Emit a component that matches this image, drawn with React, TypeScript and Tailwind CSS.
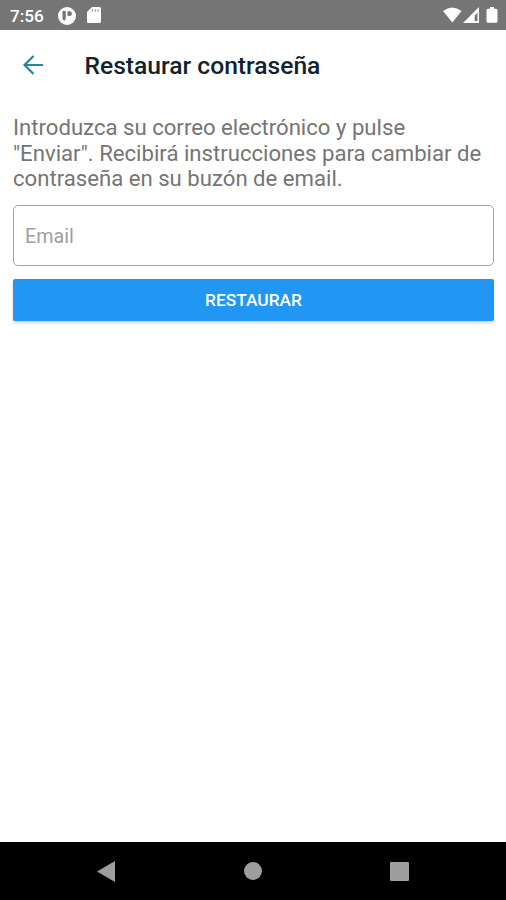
import React, { useState } from 'react';

const StatusBar: React.FC = () => (
  <div className="h-[30px] shrink-0 bg-[#757575] flex items-center text-white pl-[10px] pr-2">
    <span className="w-[48px] text-[17.200px] leading-5 font-medium pt-0.5">7:56</span>
    <svg width="18" height="18" viewBox="0 0 18 18" className="mt-px">
      <circle cx="9" cy="9" r="9" fill="#fff" />
      <path d="M4.500 4h3.300v7q0 2-1.700 2.700L4.500 12z" fill="#757575" />
      <path d="M9.500 4.300h2a2.300 2.300 0 0 1 0 4.800h-2z" fill="#757575" />
    </svg>
    <svg width="14" height="16" viewBox="0 0 14 16" className="ml-[11px]">
      <path d="M5 0h7.500Q14 0 14 1.500v13q0 1.500-1.500 1.500h-11Q0 16 0 14.500V5z" fill="#fff" />
      <path d="M5.500 2.200v2.600M8.300 2.200v2.600M11.100 2.200v2.600" stroke="#757575" strokeWidth="1.200" opacity="0.700" />
    </svg>
    <div className="flex-1" />
    <svg width="55" height="16" viewBox="0 0 55 16" fill="#fff">
      <path d="M0 4Q9.300-3 18.600 4L9.300 15.500z" />
      <path fillRule="evenodd" d="M36 0v16H20zM34.500 5.500v8.500h-2.800V8.700z" />
      <path d="M47 1.800V0h4v1.800h2q1.500 0 1.500 1.500v11q0 1.500-1.500 1.500h-8q-1.500 0-1.500-1.500v-11q0-1.500 1.500-1.500z" />
    </svg>
  </div>
);

const Toolbar: React.FC = () => (
  <header className="h-[70px] shrink-0 flex items-center px-[23px]">
    <button aria-label="Atrás" className="w-[61px]">
      <svg width="20" height="20" viewBox="0 0 20 20" fill="none" stroke="#26869a" strokeWidth="2.200">
        <path d="M20 10H1.500M10.500 1L1.500 10l9 9" />
      </svg>
    </button>
    <h1 className="text-[24.620px] leading-7 font-medium text-[#10242e] whitespace-nowrap pt-0.5 pl-[0.5px]">Restaurar contraseña</h1>
  </header>
);

const NavigationBar: React.FC = () => (
  <nav className="h-[58px] shrink-0 bg-black flex items-center justify-between px-[97px]">
    <svg width="18" height="21" viewBox="0 0 18 21" fill="#9e9e9e">
      <path d="M18 0v21L0 10.500z" />
    </svg>
    <div className="size-[18px] rounded-full bg-[#9e9e9e]" />
    <div className="size-[19px] rounded-[1px] bg-[#9e9e9e]" />
  </nav>
);

const App: React.FC = () => {
  const [email, setEmail] = useState('');

  return (
    <div className="h-screen flex flex-col bg-white font-['Roboto',sans-serif]">
      <StatusBar />
      <Toolbar />
      <main className="flex-1 pl-[13px] pr-3 pt-[15px]">
        <p className="text-[22.150px] leading-[25.700px] text-[#757575] whitespace-nowrap">
          Introduzca su correo electrónico y pulse<br />
          "Enviar". Recibirá instrucciones para cambiar de<br />
          contraseña en su buzón de email.
        </p>
        <input
          type="email"
          placeholder="Email"
          value={email}
          onChange={e => setEmail(e.target.value)}
          className="block mt-[13px] w-full h-[61px] px-[11px] pt-0.5 border border-[#a3a3a3] rounded-[5px] text-[19.700px] placeholder:text-[#a0a0a0] outline-none"
        />
        <button className="block mt-[13px] w-full h-[42px] rounded-[2px] bg-[#2196f3] text-white text-[17.350px] font-medium shadow-[0_2px_3px_rgba(0,0,0,0.18)]">
          RESTAURAR
        </button>
      </main>
      <NavigationBar />
    </div>
  );
};

export default App;
